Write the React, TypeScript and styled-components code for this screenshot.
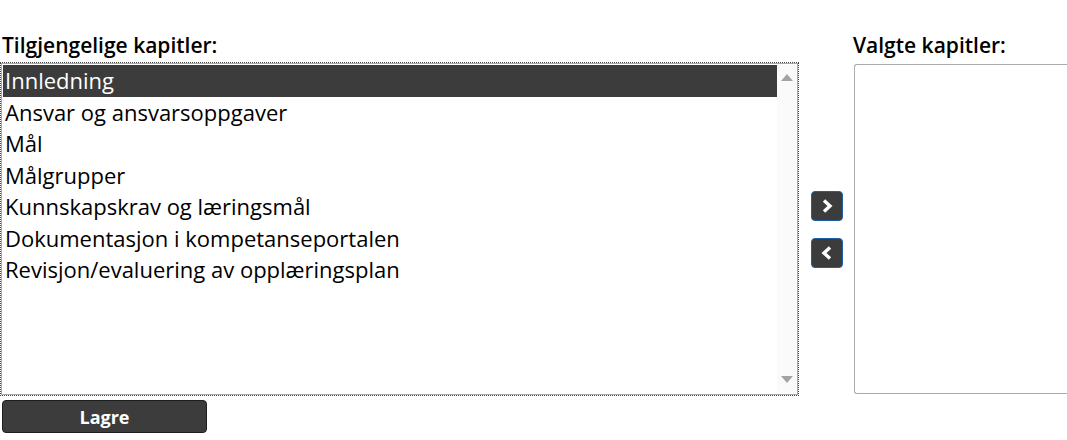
import React from "react";
import styled, { createGlobalStyle } from "styled-components";

const Global = createGlobalStyle`
  html, body { margin: 0; padding: 0; background: #ffffff; }
  body { font-family: "Open Sans", "Noto Sans", sans-serif; color: #000; }
`;

const Page = styled.div`
  padding: 30px 0 0 0;
  width: 1067px;
  height: 440px;
  box-sizing: border-box;
  overflow: hidden;
`;

const Grid = styled.div`
  display: grid;
  grid-template-columns: 799px 54px 1fr;
  grid-template-rows: auto auto auto;
`;

const Label = styled.div<{ $indent: number }>`
  font-weight: 600;
  font-size: 21px;
  line-height: 30px;
  padding-left: ${(p) => p.$indent}px;
  margin-bottom: 3px;
  white-space: nowrap;
`;

const ListBox = styled.div`
  margin-left: 1px;
  width: 797px;
  height: 332px;
  box-sizing: border-box;
  border: 1px solid #a9a9a9;
  outline: 1px dotted #444;
  padding: 1px;
  display: flex;
  background: #fff;
`;

const Items = styled.div`
  flex: 1;
  display: flex;
  flex-direction: column;
`;

const Item = styled.div<{ $selected?: boolean }>`
  font-size: 22px;
  line-height: 31.5px;
  padding-left: 2px;
  white-space: nowrap;
  background: ${(p) => (p.$selected ? "#3c3c3c" : "transparent")};
  color: ${(p) => (p.$selected ? "#ffffff" : "#000000")};
`;

const ScrollBar = styled.div`
  width: 19px;
  background: #fafafa;
  display: flex;
  flex-direction: column;
  justify-content: space-between;
  align-items: center;
  padding: 9px 0 10px 0;
`;

const Arrow = styled.div<{ $down?: boolean }>`
  width: 0;
  height: 0;
  border-left: 6px solid transparent;
  border-right: 6px solid transparent;
  ${(p) =>
    p.$down
      ? "border-top: 7px solid #a3a3a3;"
      : "border-bottom: 7px solid #a3a3a3;"}
`;

const Middle = styled.div`
  display: flex;
  flex-direction: column;
  align-items: center;
  justify-content: center;
  gap: 17px;
  padding-left: 1px;
`;

const MoveButton = styled.button`
  width: 32px;
  height: 30px;
  box-sizing: border-box;
  background: #3c3c3c;
  border: 1px solid #1f5fa3;
  border-radius: 4px;
  padding: 0;
  display: flex;
  align-items: center;
  justify-content: center;
  cursor: pointer;
`;

const SelectedBox = styled.div`
  margin-top: 1px;
  margin-left: 1px;
  height: 330px;
  box-sizing: border-box;
  border: 1px solid #ababab;
  border-right: none;
  border-radius: 3px 0 0 3px;
  background: #fff;
`;

const SaveButton = styled.button`
  margin: 5px 0 0 2px;
  width: 205px;
  height: 33px;
  box-sizing: border-box;
  background: #3c3c3c;
  border: 1px solid #1e1e1e;
  border-radius: 4px;
  color: #fff;
  font-family: "Open Sans", sans-serif;
  font-weight: 700;
  font-size: 18px;
  padding: 0;
  cursor: pointer;
`;

const Chevron = ({ dir }: { dir: "right" | "left" }) => (
  <svg width="16" height="16" viewBox="0 0 16 16">
    <path
      d={dir === "right" ? "M5 2.5 L11 8 L5 13.5" : "M11 2.5 L5 8 L11 13.5"}
      fill="none"
      stroke="#ffffff"
      strokeWidth="3.4"
      strokeLinecap="butt"
      strokeLinejoin="miter"
    />
  </svg>
);

const chapters = [
  "Innledning",
  "Ansvar og ansvarsoppgaver",
  "Mål",
  "Målgrupper",
  "Kunnskapskrav og læringsmål",
  "Dokumentasjon i kompetanseportalen",
  "Revisjon/evaluering av opplæringsplan",
];

export default function App() {
  return (
    <Page>
      <Global />
      <Grid>
        <Label $indent={2}>Tilgjengelige kapitler:</Label>
        <div />
        <Label $indent={0}>Valgte kapitler:</Label>
        <ListBox>
          <Items>
            {chapters.map((c, i) => (
              <Item key={c} $selected={i === 0}>
                {c}
              </Item>
            ))}
          </Items>
          <ScrollBar>
            <Arrow />
            <Arrow $down />
          </ScrollBar>
        </ListBox>
        <Middle>
          <MoveButton aria-label="Legg til">
            <Chevron dir="right" />
          </MoveButton>
          <MoveButton aria-label="Fjern">
            <Chevron dir="left" />
          </MoveButton>
        </Middle>
        <SelectedBox />
        <SaveButton>Lagre</SaveButton>
      </Grid>
    </Page>
  );
}
